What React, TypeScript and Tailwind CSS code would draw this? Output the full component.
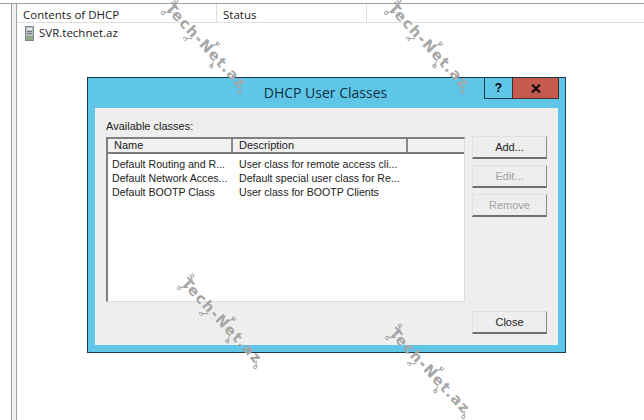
const sans = "font-['Liberation_Sans',Arial,sans-serif]";

function Watermark({ className }: { className: string }) {
  return (
    <div
      className={`absolute w-[114px] h-[16px] rotate-[47deg] origin-center pointer-events-none flex items-center ${className}`}
    >
      <span className="font-['DejaVu_Sans',sans-serif] text-[14.5px] leading-[16px] tracking-[1.4px] font-bold text-[#a6a6a6] whitespace-nowrap">
        Tech-Net.az
      </span>
      <svg
        width="114"
        height="24"
        viewBox="0 0 114 24"
        className="absolute left-0 top-[-4px]"
        fill="none"
        stroke="#a0a0a0"
        strokeWidth="1"
      >
        <path d="M2 4 L8 8 M2 20 L8 14 M36 22 L41 17 M62 2 L60 7 M74 22 L72 17 M112 18 L108 14" />
        <circle cx="2" cy="3" r="1.6" />
        <circle cx="2" cy="21" r="1.6" />
        <circle cx="36" cy="23" r="1.6" />
        <circle cx="62" cy="1.6" r="1.6" />
        <circle cx="74" cy="22" r="1.6" />
        <circle cx="112" cy="19" r="1.6" />
      </svg>
    </div>
  );
}

function ServerIcon() {
  return (
    <svg width="9" height="15" viewBox="0 0 9 15" className="shrink-0">
      <rect x="0.5" y="0.5" width="8" height="14" fill="#b4bcc0" stroke="#7d8a8c" />
      <rect x="2" y="2" width="5" height="2" fill="#eef1f2" />
      <rect x="2" y="5" width="5" height="1" fill="#6e7b7e" />
      <rect x="2" y="7" width="5" height="1" fill="#6e7b7e" />
      <rect x="1" y="10" width="7" height="4" fill="#8fa889" />
    </svg>
  );
}

function DialogButton({
  label,
  disabled,
  className = "",
}: {
  label: string;
  disabled?: boolean;
  className?: string;
}) {
  return (
    <button
      type="button"
      className={`w-[75px] h-[23px] bg-[#eeeeee] border border-[#e2e2e2] border-r-[#8a8a8a] border-b-2 border-b-[#707070] text-[11px] leading-none ${
        disabled ? "text-[#a2a2a2]" : "text-[#222222]"
      } ${className}`}
    >
      {label}
    </button>
  );
}

const rows = [
  ["Default Routing and R...", "User class for remote access cli..."],
  ["Default Network Acces...", "Default special user class for Re..."],
  ["Default BOOTP Class", "User class for BOOTP Clients"],
];

function Dialog() {
  return (
    <div
      className={`absolute left-[87px] top-[77px] w-[479px] h-[276px] bg-[#5fc6e8] border border-[#1b3b4b] flex flex-col ${sans}`}
    >
      <div className="relative h-[30px] shrink-0">
        <div className="absolute left-0 right-[2px] top-[4px] text-center font-['Open_Sans',sans-serif] text-[14px] leading-[22px] text-[#10303f]">
          DHCP User Classes
        </div>
        <div className="absolute right-[6px] top-0 flex h-[21px]">
          <div className="w-[28px] border-l border-b border-[#1b3b4b] flex items-center justify-center text-[12px] font-bold text-black">
            ?
          </div>
          <div className="w-[47px] bg-[#c75a4e] border-l border-r border-b border-[#4a2f2a] flex items-center justify-center">
            <svg width="10" height="9" viewBox="0 0 10 9">
              <path d="M1 0.5 L9 8.5 M9 0.5 L1 8.5" stroke="#111" strokeWidth="2.2" fill="none" />
            </svg>
          </div>
        </div>
      </div>
      <div className="flex-1 mx-[7px] mb-[7px] bg-[#eeeeee] pl-[11px] pr-[10px] pt-[12px] flex flex-col">
        <div className="text-[11px] leading-[13px] text-[#222222] mb-[4px]">Available classes:</div>
        <div className="flex gap-[7px]">
          <div className="w-[359px] h-[165px] bg-white border-l-2 border-t-2 border-[#808080] border-r border-b border-r-[#dddddd] border-b-[#dddddd] flex flex-col">
            <div className="flex h-[15px] shrink-0 border-b-2 border-[#7a7a7a] text-[11px] leading-[13px] text-[#222222] bg-[#f1f1f1]">
              <div className="w-[125px] pl-[6px] border-r-2 border-[#8a8a8a]">Name</div>
              <div className="w-[175px] pl-[6px] border-r-2 border-[#8a8a8a]">Description</div>
              <div className="flex-1" />
            </div>
            <div className="pt-[3px] text-[10.6px] leading-[14px] text-[#222222]">
              {rows.map(([name, description]) => (
                <div key={name} className="flex whitespace-nowrap">
                  <div className="w-[131px] pl-[4px]">{name}</div>
                  <div>{description}</div>
                </div>
              ))}
            </div>
          </div>
          <div className="flex flex-col gap-[6px] -mt-px">
            <DialogButton label="Add..." />
            <DialogButton label="Edit..." disabled />
            <DialogButton label="Remove" disabled />
          </div>
        </div>
        <div className="flex justify-end mt-[9px] pr-px">
          <DialogButton label="Close" />
        </div>
      </div>
    </div>
  );
}

export default function App() {
  return (
    <div className="relative w-[644px] h-[420px] bg-white overflow-hidden font-['Open_Sans',sans-serif]">
      <div className="flex h-full pt-[3px]">
        <div className="w-[12px] border-t border-r border-[#a0a0a0] shrink-0" />
        <div className="w-[4px] bg-[#f0f0f0] border-t border-[#a0a0a0] shrink-0" />
        <div className="flex-1 border-t border-l border-[#a0a0a0] flex flex-col">
          <div className="flex h-[19px] border-b border-[#dedede] text-[11.5px] leading-[21px] text-[#222222]">
            <div className="w-[200px] pl-[6px] border-r border-[#dedede]">Contents of DHCP</div>
            <div className="w-[150px] pl-[6px] border-r border-[#dedede]">Status</div>
          </div>
          <div className="flex items-center gap-[5px] pl-[8px] pt-[2px] text-[11.5px] leading-[16px] text-[#222222]">
            <ServerIcon />
            <span>SVR.technet.az</span>
          </div>
        </div>
      </div>
      <Dialog />
      <Watermark className="left-[150px] top-[39px]" />
      <Watermark className="left-[373px] top-[39px]" />
      <Watermark className="left-[166px] top-[314px]" />
      <Watermark className="left-[374px] top-[364px]" />
    </div>
  );
}
